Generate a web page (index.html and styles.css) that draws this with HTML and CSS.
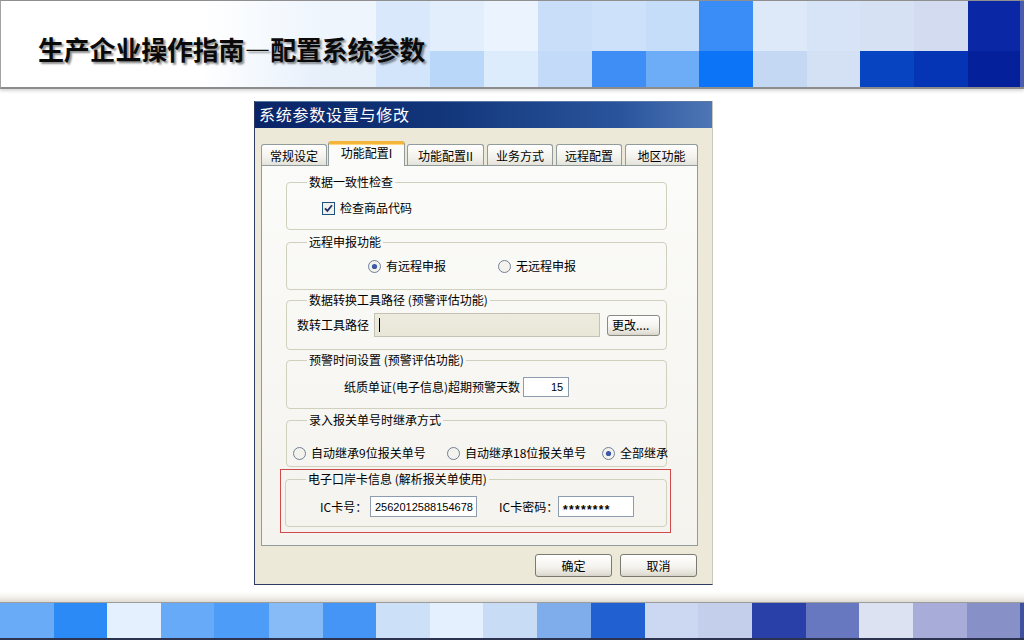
FILE: index.html
```html
<!DOCTYPE html>
<html lang="zh-CN">
<head>
<meta charset="utf-8">
<title>生产企业操作指南—配置系统参数</title>
<link rel="stylesheet" href="styles.css">
</head>
<body>
<div class="page">
  <header class="banner">
    <h1 class="title">生产企业操作指南—配置系统参数</h1>
  </header>

  <main class="stage">
    <div class="dialog">
      <div class="titlebar">系统参数设置与修改</div>
      <div class="dbody">
        <div class="tabs">
          <div class="tab w66 first">常规设定</div>
          <div class="tab w77 active">功能配置I</div>
          <div class="tab w77 after">功能配置II</div>
          <div class="tab w66">业务方式</div>
          <div class="tab w66">远程配置</div>
          <div class="tab w73">地区功能</div>
        </div>

        <div class="panel">
          <fieldset class="group">
            <legend>数据一致性检查</legend>
            <div class="gbody h40 p12 l36">
              <div class="row">
                <svg class="cb" width="13" height="13" viewBox="0 0 13 13"><rect x="0.5" y="0.5" width="12" height="12" fill="#f1f0ea" stroke="#1c5180"/><path d="M3 6.3l2.4 2.6 4.6-5.6" fill="none" stroke="#22306a" stroke-width="1.8"/></svg>
                <span class="lbl">检查商品代码</span>
              </div>
            </div>
          </fieldset>

          <fieldset class="group mt5">
            <legend>远程申报功能</legend>
            <div class="gbody h40 p10 l82">
              <div class="row">
                <div class="opt o130">
                  <svg class="rd" width="13" height="13" viewBox="0 0 13 13"><circle cx="6.5" cy="6.5" r="6" fill="#f3f2ec" stroke="#6f8096"/><circle cx="6.5" cy="6.5" r="2.6" fill="#3c58a6"/></svg>
                  <span class="lbl">有远程申报</span>
                </div>
                <div class="opt">
                  <svg class="rd" width="13" height="13" viewBox="0 0 13 13"><circle cx="6.5" cy="6.5" r="6" fill="#f3f2ec" stroke="#6f8096"/></svg>
                  <span class="lbl">无远程申报</span>
                </div>
              </div>
            </div>
          </fieldset>

          <fieldset class="group mt3">
            <legend>数据转换工具路径 (预警评估功能)</legend>
            <div class="gbody h42 p6 l10">
              <div class="row tall">
                <span class="lbl">数转工具路径</span>
                <div class="field path"><span class="caret"></span></div>
                <div class="btn small">更改....</div>
              </div>
            </div>
          </fieldset>

          <fieldset class="group mt3">
            <legend>预警时间设置 (预警评估功能)</legend>
            <div class="gbody h41 p10 l58">
              <div class="row mid">
                <span class="lbl">纸质单证(电子信息)超期预警天数</span>
                <div class="field days">15</div>
              </div>
            </div>
          </fieldset>

          <fieldset class="group mt4">
            <legend>录入报关单号时继承方式</legend>
            <div class="gbody h39 p19 l6">
              <div class="row">
                <div class="opt o154">
                  <svg class="rd" width="13" height="13" viewBox="0 0 13 13"><circle cx="6.5" cy="6.5" r="6" fill="#f3f2ec" stroke="#6f8096"/></svg>
                  <span class="lbl">自动继承9位报关单号</span>
                </div>
                <div class="opt o155">
                  <svg class="rd" width="13" height="13" viewBox="0 0 13 13"><circle cx="6.5" cy="6.5" r="6" fill="#f3f2ec" stroke="#6f8096"/></svg>
                  <span class="lbl">自动继承18位报关单号</span>
                </div>
                <div class="opt">
                  <svg class="rd" width="13" height="13" viewBox="0 0 13 13"><circle cx="6.5" cy="6.5" r="6" fill="#f3f2ec" stroke="#6f8096"/><circle cx="6.5" cy="6.5" r="2.6" fill="#3c58a6"/></svg>
                  <span class="lbl">全部继承</span>
                </div>
              </div>
            </div>
          </fieldset>

          <div class="highlight">
            <fieldset class="group">
              <legend>电子口岸卡信息 (解析报关单使用)</legend>
              <div class="gbody h40 p10 l35">
                <div class="row card">
                  <span class="lbl k1">IC卡号：</span>
                  <div class="field num">2562012588154678</div>
                  <span class="lbl k2">IC卡密码：</span>
                  <div class="field pwd">********</div>
                </div>
              </div>
            </fieldset>
          </div>
        </div>

        <div class="actions">
          <div class="btn big">确定</div>
          <div class="btn big">取消</div>
        </div>
      </div>
    </div>
  </main>

  <footer class="strip">
    <div class="fade"></div>
    <div class="tiles"></div>
  </footer>
</div>
</body>
</html>
```

FILE: styles.css
```css
html, body {
  margin: 0;
  padding: 0;
  background: #ffffff;
}

body {
  font-family: "Noto Sans CJK SC", "Noto Sans", sans-serif;
  font-size: 12px;
  color: #000;
}

.page {
  width: 1024px;
  height: 640px;
  display: flex;
  flex-direction: column;
  overflow: hidden;
}

/* ---------- banner ---------- */
.banner {
  box-sizing: border-box;
  height: 89px;
  flex: none;
  border-top: 1px solid #8f8f8f;
  border-left: 1px solid #a2a2a2;
  border-bottom: 2px solid #8c8c8c;
  box-shadow: 0 2px 3px rgba(0, 0, 0, 0.16);
  padding: 34px 0 0 37px;
  background:
    linear-gradient(to right,
      #ffffff 0, #ffffff 200px, #eef5fd 322px, #eef5fd 375px,
      #d9e8fa 375px 429px,
      #e2eefc 429px 483px,
      #ebf4fe 483px 537px,
      #c9def8 537px 591px,
      #cde1fa 591px 645px,
      #c6ddf9 645px 698px,
      #3a8df6 698px 752px,
      #dde9f9 752px 806px,
      #d7e3f6 806px 859px,
      #d6e1f3 859px 913px,
      #d2dbf0 913px 967px,
      #0a27a6 967px 1019px,
      #4a5cb0 1019px) 0 0 / 100% 50px no-repeat,
    linear-gradient(to right,
      #ffffff 0, #ffffff 200px, #e6f0fb 322px, #e6f0fb 375px,
      #d3e5fa 375px 429px,
      #b9d7f8 429px 483px,
      #dcecfd 483px 537px,
      #c3dbf8 537px 591px,
      #3e8ef6 591px 645px,
      #6dacf7 645px 698px,
      #0b74f7 698px 752px,
      #c4d8f3 752px 806px,
      #d4e1f4 806px 859px,
      #0744c2 859px 913px,
      #0535b5 913px 967px,
      #04209a 967px 1019px,
      #4a5cb0 1019px) 0 50px / 100% 38px no-repeat;
}

.title {
  margin: 0;
  font-family: "Noto Sans CJK SC", sans-serif;
  font-weight: 700;
  font-size: 26px;
  line-height: 28px;
  color: #0a0a0a;
  letter-spacing: -0.2px;
  text-shadow: 2px 2px 2px rgba(0, 0, 0, 0.45);
}

/* ---------- stage ---------- */
.stage {
  flex: 1;
  padding: 12px 0 0 254px;
}

.dialog {
  box-sizing: border-box;
  width: 459px;
  height: 484px;
  background: #ece9d8;
  border-left: 1px solid #2e3c62;
  border-bottom: 1px solid #2e3c62;
  border-right: 1px solid #c9c7bb;
  display: flex;
  flex-direction: column;
}

.titlebar {
  height: 27px;
  line-height: 26px;
  padding-left: 4px;
  color: #ffffff;
  font-size: 16px;
  letter-spacing: 0.75px;
  background: linear-gradient(to right, #0a2468 0%, #123579 40%, #2a559c 80%, #4e76b6 100%);
  box-shadow: inset 0 1px 0 #5a78a8;
}

.dbody {
  padding: 13px 14px 0 6px;
}

/* ---------- tabs ---------- */
.tabs {
  display: flex;
  align-items: flex-end;
  height: 24px;
  position: relative;
  z-index: 1;
}

.tab {
  box-sizing: border-box;
  height: 21px;
  margin-left: 3px;
  border: 1px solid #919b9c;
  border-bottom: none;
  border-radius: 3px 3px 0 0;
  background: linear-gradient(#ffffff, #f3f2ed 60%, #e3e2da);
  display: flex;
  align-items: center;
  justify-content: center;
  line-height: 14px;
  padding-top: 1px;
}

.tab.first { margin-left: 0; }
.tab.after { margin-left: 2px; }
.w66 { width: 66px; }
.w73 { width: 73px; }
.w77 { width: 77px; }

.tab.active {
  height: 25px;
  margin-left: 1px;
  margin-bottom: -1px;
  border-top: 3px solid #f5b43a;
  box-shadow: inset 0 1px 0 #ffd67a;
  background: #fbfbf9;
  padding-top: 0;
  padding-bottom: 4px;
}

.panel {
  box-sizing: border-box;
  height: 381px;
  border: 1px solid #919b9c;
  background: linear-gradient(#fbfbf9, #f4f3ee);
  padding: 9px 30px 0 24px;
}

/* ---------- group boxes ---------- */
.group {
  margin: 0;
  padding: 0;
  border: 1px solid #d0d0bf;
  border-radius: 4px;
  min-inline-size: 0;
}

.group legend {
  margin-left: 20px;
  padding: 0 2px;
  line-height: 14px;
  font-size: 12px;
}

.mt3 { margin-top: 3px; }
.mt4 { margin-top: 4px; }
.mt5 { margin-top: 5px; }

.gbody { box-sizing: border-box; }
.h39 { height: 39px; }
.h40 { height: 40px; }
.h41 { height: 41px; }
.h42 { height: 42px; }
.p6 { padding-top: 6px; }
.p10 { padding-top: 10px; }
.p12 { padding-top: 12px; }
.p19 { padding-top: 19px; }
.l6 { padding-left: 6px; }
.l10 { padding-left: 10px; }
.l35 { padding-left: 34px; }
.l36 { padding-left: 35px; }
.l58 { padding-left: 57px; }
.l82 { padding-left: 81px; }

.row {
  display: flex;
  align-items: center;
  height: 14px;
  line-height: 14px;
  white-space: nowrap;
}

.row.tall { height: 24px; }
.row.mid { height: 20px; }
.row.card { height: 21px; }

.cb, .rd { flex: none; display: block; }
.cb + .lbl, .rd + .lbl { margin-left: 5px; }

.opt {
  display: flex;
  align-items: center;
  flex: none;
}
.o130 { width: 130px; }
.o154 { width: 154px; }
.o155 { width: 155px; }

.field {
  box-sizing: border-box;
  border: 1px solid #8e9cb0;
  background: #ffffff;
  display: flex;
  align-items: center;
  flex: none;
}

.field.path {
  width: 226px;
  height: 24px;
  margin-left: 5px;
  background: linear-gradient(#edebdd, #e9e7d8);
  border-color: #c4c2b4;
  padding-left: 4px;
}

.caret {
  width: 1px;
  height: 14px;
  background: #000;
}

.field.days {
  width: 46px;
  height: 20px;
  margin-left: 3px;
  justify-content: flex-end;
  padding-right: 5px;
  font-family: "Liberation Sans", sans-serif;
  font-size: 11px;
}

.k1 { width: 50px; }
.k2 { width: 59px; margin-left: 22px; }

.field.num {
  width: 107px;
  height: 21px;
  padding-left: 4px;
  font-family: "Liberation Sans", sans-serif;
  font-size: 11px;
}

.field.pwd {
  width: 76px;
  height: 21px;
  padding: 7px 0 0 4px;
  font-family: "Liberation Sans", sans-serif;
  font-weight: 700;
  font-size: 12px;
  letter-spacing: 1.3px;
}

.highlight {
  margin: 2px -4px 0 -6px;
  border: 1px solid #cf4a4a;
  padding: 2px 3px 5px 4px;
}

/* ---------- buttons ---------- */
.btn {
  box-sizing: border-box;
  border: 1px solid #7a7a72;
  border-radius: 3px;
  background: linear-gradient(#ffffff, #f4f3ee 55%, #e2e0d6 90%, #d6d3c8);
  display: flex;
  align-items: center;
  justify-content: center;
  line-height: 14px;
  flex: none;
}

.btn.small {
  width: 53px;
  height: 21px;
  margin-left: 7px;
  justify-content: flex-start;
  padding-left: 4px;
  border-color: #8a8a82;
}

.btn.big {
  width: 77px;
  height: 23px;
}

.actions {
  display: flex;
  justify-content: flex-end;
  gap: 8px;
  margin-top: 8px;
  padding-right: 1px;
}

/* ---------- bottom strip ---------- */
.strip {
  flex: none;
  height: 48px;
  display: flex;
  flex-direction: column;
}

.fade {
  height: 10px;
  background: linear-gradient(#ffffff, #f3f1ec 50%, #dedbd3);
}

.tiles {
  height: 35px;
  border-top: 1px solid #9c9c9c;
  border-bottom: 2px solid #2b3350;
  background: linear-gradient(to right,
    #6aabf8 0 54px,
    #2b8af5 54px 107px,
    #e4f0fe 107px 161px,
    #66aaf8 161px 214px,
    #4d9cf7 214px 269px,
    #86bbf8 269px 323px,
    #4495f5 323px 376px,
    #cce0f8 376px 430px,
    #e4f0fe 430px 483px,
    #c8dcf6 483px 537px,
    #7fadec 537px 591px,
    #2060d0 591px 645px,
    #ccd8f2 645px 698px,
    #c4cfec 698px 752px,
    #2840a8 752px 806px,
    #6878c0 806px 859px,
    #dde2f2 859px 913px,
    #a8acd8 913px 967px,
    #8890c8 967px 1020px,
    #4050a0 1020px);
}
```
